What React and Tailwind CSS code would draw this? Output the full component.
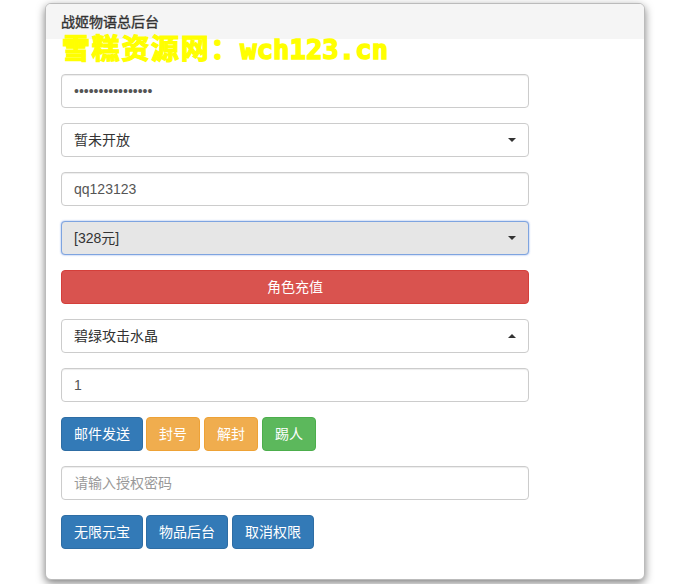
import React from 'react';

const FONT = "font-['Liberation_Sans','Noto_Sans_CJK_SC',sans-serif]";
const FIELD = 'block w-full h-[34px] px-3 text-sm text-[#555] bg-white border border-[#ccc] rounded shadow-[inset_0_1px_1px_rgba(0,0,0,0.075)] outline-none';
const BTN = 'h-[34px] px-3 text-sm text-white border rounded';
const BLUE = 'bg-[#337ab7] border-[#2e6da4]';
const ORANGE = 'bg-[#f0ad4e] border-[#eea236]';
const GREEN = 'bg-[#5cb85c] border-[#4cae4c]';

function Caret({ up }) {
  return (
    <svg width="8" height="4" viewBox="0 0 8 4" className="shrink-0">
      <path d={up ? 'M0 4L4 0L8 4Z' : 'M0 0L8 0L4 4Z'} fill="#333" />
    </svg>
  );
}

function Select({ label, up, active }) {
  return (
    <div
      className={`flex items-center justify-between w-full h-[34px] pl-3 pr-3 text-sm border rounded ${
        active
          ? 'bg-[#e6e6e6] border-[#7ea4e0] text-[#333] shadow-[0_0_2px_rgba(70,120,220,0.7)]'
          : 'bg-white border-[#ccc] text-[#333]'
      }`}
    >
      <span>{label}</span>
      <Caret up={up} />
    </div>
  );
}

export default function App() {
  return (
    <div className={`${FONT} w-[687px] h-[584px] bg-white overflow-hidden`}>
      <div className="relative ml-[45px] mt-[3px] w-[600px] h-[577px] bg-white border border-[#bbb] rounded-[6px] shadow-[0_3px_9px_rgba(0,0,0,0.5)]">
        <div className="h-[35px] px-[15px] pt-[9px] bg-[#f5f5f5] rounded-t-[5px] text-sm leading-[18px] text-[#333] [-webkit-text-stroke:0.35px_#333]">
          战姬物语总后台
        </div>
        {/* watermark sits over the heading edge */}
        <div className="absolute left-[16px] top-[28px] text-[28px] leading-[36px] font-bold whitespace-nowrap text-[#ffff00] font-['DejaVu_Sans_Mono','Noto_Sans_CJK_SC',monospace] [-webkit-text-stroke:1.2px_#ffff00]">
          <span className="tracking-[1.7px]">雪糕资源网：</span>
          <span className="text-[27.3px] [-webkit-text-stroke:1.5px_#ffff00]">wch123.cn</span>
        </div>

        <div className="w-[498px] pt-[35px] px-[15px] flex flex-col gap-[15px]">
          <input className={FIELD} type="password" defaultValue="1234567890123456" />
          <Select label="暂未开放" />
          <input className={FIELD} defaultValue="qq123123" />
          <Select label="[328元]" active />
          <button className={`${BTN} w-full bg-[#d9534f] border-[#d43f3a]`}>角色充值</button>
          <Select label="碧绿攻击水晶" up />
          <input className={FIELD} defaultValue="1" />
          <div className="flex gap-1">
            <button className={`${BTN} ${BLUE} -mr-px`}>邮件发送</button>
            <button className={`${BTN} ${ORANGE}`}>封号</button>
            <button className={`${BTN} ${ORANGE}`}>解封</button>
            <button className={`${BTN} ${GREEN}`}>踢人</button>
          </div>
          <input className={`${FIELD} placeholder:text-[#999]`} placeholder="请输入授权密码" />
          <div className="flex gap-1">
            <button className={`${BTN} ${BLUE} -mr-px`}>无限元宝</button>
            <button className={`${BTN} ${BLUE}`}>物品后台</button>
            <button className={`${BTN} ${BLUE}`}>取消权限</button>
          </div>
        </div>
      </div>
    </div>
  );
}
